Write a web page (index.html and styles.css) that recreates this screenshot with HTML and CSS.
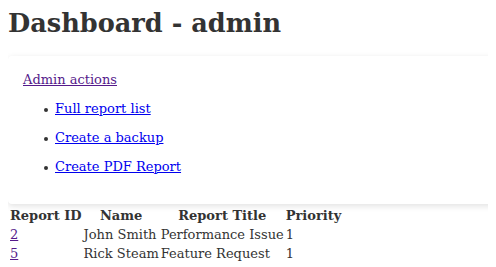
FILE: index.html
```html
<!DOCTYPE html>
<html lang="en">
<head>
    <meta charset="UTF-8">
    <title>Dashboard</title>
    <link rel="stylesheet" href="styles.css">
</head>
<body>
    <h1>Dashboard - admin</h1>
    <div class="card">
        <a class="visited" href="#">Admin actions</a>
        <ul>
            <li><a href="#">Full report list</a></li>
            <li><a href="#">Create a backup</a></li>
            <li><a href="#">Create PDF Report</a></li>
        </ul>
    </div>
    <table>
        <tr>
            <th>Report ID</th>
            <th>Name</th>
            <th>Report Title</th>
            <th>Priority</th>
        </tr>
        <tr>
            <td><a class="visited" href="#">2</a></td>
            <td>John Smith</td>
            <td>Performance Issue</td>
            <td>1</td>
        </tr>
        <tr>
            <td><a class="visited" href="#">5</a></td>
            <td>Rick Steam</td>
            <td>Feature Request</td>
            <td>1</td>
        </tr>
    </table>
</body>
</html>
```

FILE: styles.css
```css
body {
    font-family: "DejaVu Serif", serif;
    font-size: 13px;
    color: #333;
    margin: 8px;
}
h1 {
    font-size: 25.6px;
    margin: 0 0 18px 0;
}
a {
    color: #0000ee;
}
a.visited {
    color: #551a8b;
}
.card {
    background: #fff;
    width: 100%;
    padding: 16px 16px 30px 15px;
    border-radius: 4px;
    box-shadow: 0 2px 6px rgba(0,0,0,0.12);
}
.card ul {
    margin: 0;
    padding-left: 32px;
    list-style: none;
}
.card li {
    margin-top: 14px;
}
.card li::before {
    content: "";
    display: inline-block;
    width: 4px;
    height: 4px;
    border-radius: 50%;
    background: #333;
    margin-left: -11px;
    margin-right: 7px;
    vertical-align: middle;
}
table {
    margin-top: 1px;
    border-spacing: 2px;
}
th, td {
    padding: 1px 0;
}
```
